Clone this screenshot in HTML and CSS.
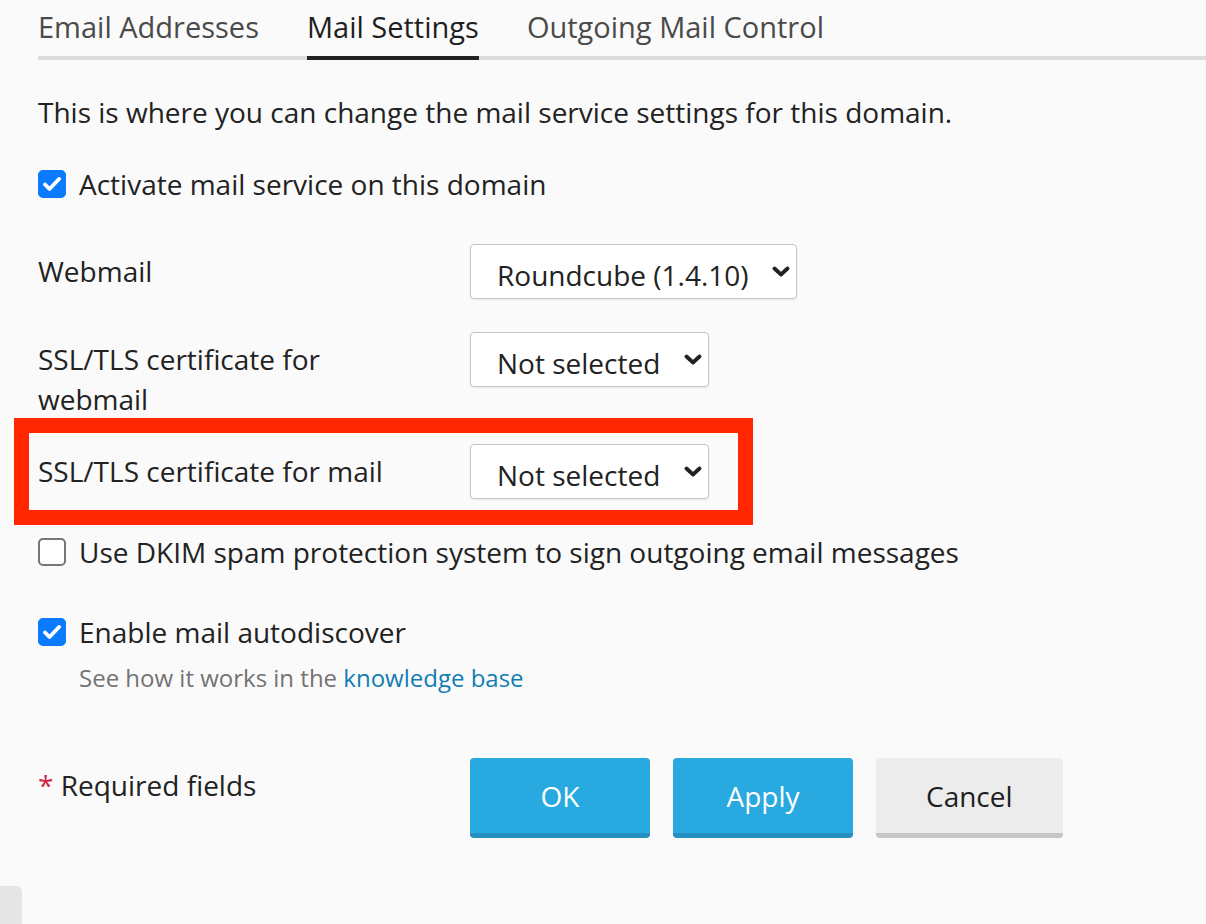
FILE: index.html
```html
<!DOCTYPE html>
<html lang="en">
<head>
    <meta charset="UTF-8">
    <meta name="viewport" content="width=device-width, initial-scale=1.0">
    <title>Mail Settings</title>
    <link rel="stylesheet" href="styles.css">
</head>
<body>
    <div class="page">
        <ul class="tabs">
            <li class="tab">Email Addresses</li>
            <li class="tab tab-active">Mail Settings</li>
            <li class="tab">Outgoing Mail Control</li>
        </ul>

        <p class="intro">This is where you can change the mail service settings for this domain.</p>

        <label class="check-row">
            <span class="checkbox checkbox-on">
                <svg width="18" height="14" viewBox="0 0 18 14"><path d="M2 7.5 L6.5 12 L16 2" fill="none" stroke="#fff" stroke-width="3.8" stroke-linecap="round" stroke-linejoin="round"/></svg>
            </span>
            Activate mail service on this domain
        </label>

        <div class="form-row row-webmail">
            <div class="form-label">Webmail</div>
            <div class="select-wrap">
                <select class="select select-wide"><option>Roundcube (1.4.10)</option></select>
                <svg class="chevron" width="18" height="11" viewBox="0 0 18 11"><path d="M2.5 2.5 L9 8.5 L15.5 2.5" fill="none" stroke="#222" stroke-width="3.8" stroke-linecap="round" stroke-linejoin="round"/></svg>
            </div>
        </div>

        <div class="form-row row-cert-webmail">
            <div class="form-label">SSL/TLS certificate for webmail</div>
            <div class="select-wrap">
                <select class="select select-narrow"><option>Not selected</option></select>
                <svg class="chevron" width="18" height="11" viewBox="0 0 18 11"><path d="M2.5 2.5 L9 8.5 L15.5 2.5" fill="none" stroke="#222" stroke-width="3.8" stroke-linecap="round" stroke-linejoin="round"/></svg>
            </div>
        </div>

        <div class="form-row row-cert-mail">
            <div class="highlight"></div>
            <div class="form-label">SSL/TLS certificate for mail</div>
            <div class="select-wrap">
                <select class="select select-narrow"><option>Not selected</option></select>
                <svg class="chevron" width="18" height="11" viewBox="0 0 18 11"><path d="M2.5 2.5 L9 8.5 L15.5 2.5" fill="none" stroke="#222" stroke-width="3.8" stroke-linecap="round" stroke-linejoin="round"/></svg>
            </div>
        </div>

        <label class="check-row row-dkim">
            <span class="checkbox"></span>
            Use DKIM spam protection system to sign outgoing email messages
        </label>

        <label class="check-row row-autodiscover">
            <span class="checkbox checkbox-on">
                <svg width="18" height="14" viewBox="0 0 18 14"><path d="M2 7.5 L6.5 12 L16 2" fill="none" stroke="#fff" stroke-width="3.8" stroke-linecap="round" stroke-linejoin="round"/></svg>
            </span>
            Enable mail autodiscover
        </label>
        <div class="hint">See how it works in the <a href="#">knowledge base</a></div>

        <div class="form-row row-footer">
            <div class="form-label"><span class="required">*</span> Required fields</div>
            <div class="buttons">
                <button class="btn btn-primary">OK</button>
                <button class="btn btn-primary">Apply</button>
                <button class="btn btn-default">Cancel</button>
            </div>
        </div>
    </div>
    <div class="side-toggle"></div>
</body>
</html>
```

FILE: styles.css
```css
body {
    margin: 0;
    background-color: #fafafa;
    font-family: "Open Sans", "Liberation Sans", sans-serif;
    font-size: 28px;
    line-height: 40px;
    color: #222;
}
.page {
    padding: 0 0 0 38px;
}
.tabs {
    display: flex;
    gap: 48px;
    list-style: none;
    margin: 0;
    padding: 0;
    border-bottom: 4px solid #dcdcdc;
    font-size: 29px;
}
.tab {
    padding: 7px 0 9px;
    margin-bottom: -4px;
    border-bottom: 4px solid transparent;
    color: #4a4a4a;
}
.tab-active {
    color: #1e1e1e;
    border-bottom-color: #222;
}
.intro {
    margin: 32px 0 0;
}
.check-row {
    display: flex;
    align-items: center;
    gap: 13px;
    margin-top: 32px;
}
.checkbox {
    width: 28px;
    height: 28px;
    box-sizing: border-box;
    border: 2px solid #777;
    border-radius: 5px;
    background-color: #fff;
    display: flex;
    align-items: center;
    justify-content: center;
}
.checkbox-on {
    background-color: #0a7aff;
    border-color: #0a7aff;
}
.form-row {
    display: flex;
    align-items: flex-start;
    position: relative;
}
.form-label {
    width: 432px;
    box-sizing: border-box;
    padding: 7px 40px 0 0;
}
.row-webmail {
    margin-top: 40px;
}
.row-cert-webmail {
    margin-top: 33px;
}
.row-cert-mail {
    margin-top: 25px;
}
.row-dkim {
    margin-top: 33px;
}
.row-autodiscover {
    margin-top: 40px;
}
.row-footer {
    margin-top: 64px;
}
.select-wrap {
    position: relative;
}
.select {
    appearance: none;
    -webkit-appearance: none;
    height: 55px;
    box-sizing: border-box;
    padding: 7px 0 0 26px;
    border: 1px solid #c6c6c6;
    border-radius: 4px;
    background-color: #fff;
    box-shadow: 0 1px 2px rgba(0, 0, 0, 0.08);
    font-family: inherit;
    font-size: 28px;
    color: #222;
}
.select-wide {
    width: 327px;
}
.select-narrow {
    width: 239px;
}
.chevron {
    position: absolute;
    right: 7px;
    top: 22px;
    pointer-events: none;
}
.highlight {
    position: absolute;
    top: -26px;
    left: -24px;
    width: 739px;
    height: 107px;
    box-sizing: border-box;
    border: 15px solid #ff2600;
    pointer-events: none;
}
.hint {
    margin-top: 10px;
    padding-left: 41px;
    font-size: 24px;
    line-height: 32px;
    color: #737373;
}
.hint a {
    color: #117db3;
    text-decoration: none;
}
.required {
    color: #d21f45;
}
.buttons {
    display: flex;
    gap: 23px;
}
.btn {
    min-width: 180px;
    height: 80px;
    padding: 0 50px;
    box-sizing: border-box;
    border: none;
    border-radius: 4px;
    font-family: inherit;
    font-size: 28px;
    cursor: pointer;
}
.btn-primary {
    background-color: #28a9df;
    border-bottom: 5px solid #2490bf;
    color: #fff;
}
.btn-default {
    background-color: #ececec;
    border-bottom: 5px solid #c6c6c6;
    color: #1e1e1e;
}
.side-toggle {
    position: fixed;
    left: 0;
    bottom: 0;
    width: 22px;
    height: 38px;
    background-color: #e5e5e5;
    border-top-right-radius: 6px;
}
```
